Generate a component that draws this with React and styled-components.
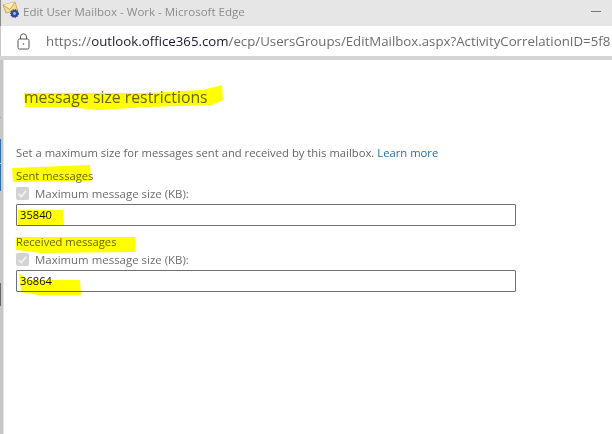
import React from 'react';
import styled, { createGlobalStyle } from 'styled-components';

const GlobalStyle = createGlobalStyle`
  html, body {
    margin: 0;
    padding: 0;
    background: #fff;
    overflow: hidden;
  }
`;

const Window = styled.div`
  position: relative;
  width: 612px;
  height: 434px;
  overflow: hidden;
  background: #fff;
  font-family: "Open Sans", "Noto Sans", sans-serif;
  color: #666;
`;

const TitleBar = styled.div`
  display: flex;
  align-items: center;
  box-sizing: border-box;
  height: 26px;
  padding: 0 11px 4px 1px;
  gap: 3px;
  border-left: 1px solid #8a8a8a;
  background: #e6e6e6;
  font-size: 11.53px;
  color: #8c8c8c;
`;

const TitleText = styled.span`
  flex: 1;
`;

const Minimize = styled.span`
  width: 10px;
  height: 1px;
  background: #777;
`;

const AddressBar = styled.div`
  display: flex;
  align-items: center;
  box-sizing: border-box;
  height: 30px;
  padding-left: 16px;
  gap: 16px;
  border-left: 1px solid #c8c8c8;
  background: #fff;
  font-size: 13.25px;
  color: #6d6d6d;
  white-space: nowrap;
  overflow: hidden;
`;

const Host = styled.span`
  color: #1b1b2e;
`;

const Divider = styled.div`
  height: 4px;
  background: #d4d4d4;
`;

const Content = styled.div`
  display: flex;
  height: 374px;
`;

const Rail = styled.div`
  box-sizing: content-box;
  width: 1px;
  border-right: 2px solid #c6c6c6;
  background: linear-gradient(
    to bottom,
    #c6c6c6 0 57px,
    #8fa9c4 57px 58px,
    #c6c6c6 58px 79px,
    #2f6fa8 79px 103px,
    #c6c6c6 103px 104px,
    #2f6fa8 104px 131px,
    #c6c6c6 131px 223px,
    #666 223px 246px,
    #c6c6c6 246px
  );
`;

const Panel = styled.div`
  flex: 1;
  border-left: 1px solid #e4e4e4;
  padding: 27px 0 0 12px;
`;

const Heading = styled.h1`
  margin: 0 0 38px 8px;
  font-size: 15.8px;
  line-height: 20px;
  font-weight: 400;
  color: #666;
`;

const Intro = styled.p`
  margin: 0;
  font-size: 11.27px;
  line-height: 15px;
  color: #666;
`;

const Learn = styled.a`
  color: #1f6fb5;
`;

const Section = styled.section`
  display: flex;
  flex-direction: column;
  margin-top: 8px;
`;

const SectionTitle = styled.div`
  font-size: 11.2px;
  line-height: 15px;
  color: #666;
`;

const CheckRow = styled.div`
  display: flex;
  align-items: center;
  gap: 6px;
  height: 18px;
  margin-top: 1px;
  font-size: 11.45px;
  color: #6e6e6e;
`;

const Check = styled.span`
  display: flex;
  align-items: center;
  justify-content: center;
  width: 13px;
  height: 13px;
  background: #d2d2d2;
  border-radius: 2px;
`;

const Field = styled.div`
  box-sizing: border-box;
  width: 500px;
  height: 22px;
  padding-left: 3px;
  margin-top: 2px;
  border: 1px solid #707070;
  border-radius: 1px;
  font-size: 11.2px;
  line-height: 20px;
  color: #111;
`;

const Highlights = styled.svg`
  position: absolute;
  left: 0;
  top: 0;
  mix-blend-mode: multiply;
  pointer-events: none;
`;

function MailIcon() {
  return (
    <svg width="18" height="22" viewBox="0 0 18 22">
      <path d="M1 5L13 2 15.5 10 4 13z" fill="#f3dc8c" stroke="#b9973f" strokeWidth="0.7" />
      <path d="M1 5l7 4.5L13 2" fill="#fbeeb8" stroke="#b9973f" strokeWidth="0.7" />
      <circle cx="12.5" cy="13.5" r="3.6" fill="#2d4fa8" stroke="#24408f" strokeWidth="1.6" strokeDasharray="1.2 0.9" />
      <circle cx="12.5" cy="13.5" r="1.4" fill="#a9bde8" />
    </svg>
  );
}

function LockIcon() {
  return (
    <svg width="13" height="17" viewBox="0 0 13 17" fill="none" stroke="#555" strokeWidth="1">
      <path d="M3.5 6V3.8a3 3 0 0 1 6 0V6" />
      <rect x="1" y="6" width="11" height="10" rx="1.5" />
      <circle cx="6.5" cy="11" r="0.8" fill="#555" stroke="none" />
    </svg>
  );
}

function CheckMark() {
  return (
    <svg width="11" height="11" viewBox="0 0 11 11" fill="none" stroke="#f0f0f0" strokeWidth="1.8">
      <path d="M1.5 5.8l2.8 2.8 5-6" />
    </svg>
  );
}

function SizeSection({ title, value }) {
  return (
    <Section>
      <SectionTitle>{title}</SectionTitle>
      <CheckRow>
        <Check>
          <CheckMark />
        </Check>
        Maximum message size (KB):
      </CheckRow>
      <Field>{value}</Field>
    </Section>
  );
}

function App() {
  return (
    <Window>
      <GlobalStyle />
      <TitleBar>
        <MailIcon />
        <TitleText>Edit User Mailbox - Work - Microsoft Edge</TitleText>
        <Minimize />
      </TitleBar>
      <AddressBar>
        <LockIcon />
        <span>
          https://<Host>outlook.office365.com</Host>/ecp/UsersGroups/EditMailbox.aspx?ActivityCorrelationID=5f8
        </span>
      </AddressBar>
      <Divider />
      <Content>
        <Rail />
        <Panel>
          <Heading>message size restrictions</Heading>
          <Intro>
            Set a maximum size for messages sent and received by this mailbox. <Learn>Learn more</Learn>
          </Intro>
          <SizeSection title="Sent messages" value="35840" />
          <SizeSection title="Received messages" value="36864" />
        </Panel>
      </Content>
      <Highlights width="612" height="434">
        <path d="M24 93L82 93 148 93 202 90 222 85 223 100 212 105 148 107 98 110 68 107 25 107z" fill="#ffff00" />
        <path d="M12 168L90 165 91 181 13 182z" fill="#ffff00" />
        <path d="M18 210H63L64 225 18 226z" fill="#ffff00" />
        <path d="M16 237H135V252L41 253 16 250z" fill="#ffff00" />
        <path d="M19 273L28 280H80L81 295 38 295 21 292z" fill="#ffff00" />
      </Highlights>
    </Window>
  );
}

export default App;
